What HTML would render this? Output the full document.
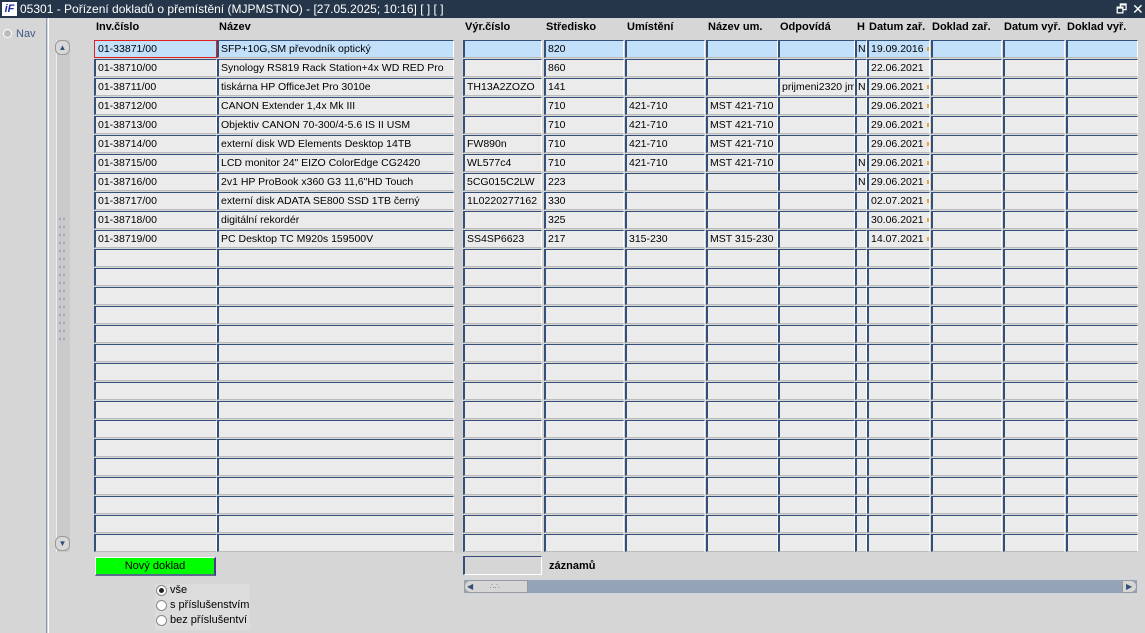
<!DOCTYPE html>
<html><head><meta charset="utf-8"><style>
*{margin:0;padding:0;box-sizing:border-box}
body{width:1145px;height:633px;overflow:hidden;background:#d6d6d6;font-family:"Liberation Sans",sans-serif;font-size:11px;position:relative;color:#000}
.a{position:absolute}
#tb{left:0;top:0;width:1145px;height:18px;background:#25364a;color:#fff;font-size:12px;line-height:18px}
#left{left:0;top:18px;width:47px;height:615px;background:#d6d6d6;border-right:1px solid #8799b3}
#left2{left:48px;top:18px;width:1px;height:615px;background:#fff}
.h{top:21px;font-weight:bold;font-size:11px}
.f{position:absolute;height:18px;background:#ebebeb;border-top:1px solid #34507a;border-left:2px solid #34507a;border-right:1px solid #fff;border-bottom:1px solid #bbb;line-height:17px;padding-left:2px;white-space:nowrap;overflow:hidden;font-size:10.5px}
.s .f{background:#c3e0fb}
.r{position:absolute;left:0;width:1145px;height:19px}
.c1{left:94px;width:123px}.c2{left:217px;width:237px}.c3{left:463px;width:79px}.c4{left:544px;width:80px}.c5{left:625px;width:80px}.c6{left:706px;width:72px}.c7{left:778px;width:77px}.c8{left:855px;width:12px;padding-left:1px}.c9{left:867px;width:63px}.c10{left:931px;width:71px}.c11{left:1003px;width:62px}.c12{left:1066px;width:72px}
.c9::after{content:"";position:absolute;right:0;top:6px;width:2px;height:4px;background:#e8a43a}
.e9 .c9::after{display:none}
</style></head><body>
<div id="tb" class="a"><span class="a" style="left:2px;top:2px;width:15px;height:14px;background:#fff;color:#1a2aa8;font-weight:bold;font-style:italic;font-size:11px;line-height:14px;text-align:center">iF</span><span class="a" style="left:20px">05301 - Pořízení dokladů o přemístění (MJPMSTNO) - [27.05.2025; 10:16]  [ ]  [ ]</span><span class="a" style="left:1116px;font-size:12px">🗗</span><span class="a" style="left:1132px;font-size:14px">✕</span></div>
<div id="left" class="a"></div><div id="left2" class="a"></div>
<div class="a" style="left:3px;top:29px;width:9px;height:9px;border-radius:50%;background:#bbb;border:1px solid #fff"></div>
<div class="a" style="left:16px;top:28px;color:#3d5a8a;font-size:11px">Nav</div>
<div class="a" style="left:56px;top:40px;width:14px;height:512px;background:#cacaca;border-left:1px solid #eee"></div>
<div class="a" style="left:55px;top:40px;width:15px;height:15px;background:#d8d8d8;border:1px solid #999;border-radius:6px;text-align:center;font-size:8px;line-height:13px;color:#34507a">▲</div>
<div class="a" style="left:55px;top:536px;width:15px;height:15px;background:#d8d8d8;border:1px solid #999;border-radius:6px;text-align:center;font-size:8px;line-height:13px;color:#34507a">▼</div>
<div class="a" style="left:58px;top:215px;width:8px;height:130px;background-image:radial-gradient(#8a9ab5 0.6px,transparent 0.9px);background-size:4px 8px"></div>
<div class="a" style="left:454px;top:40px;width:8px;height:513px;background:#cfcfcf"></div>
<div class="a h" style="left:96px">Inv.číslo</div><div class="a h" style="left:219px">Název</div><div class="a h" style="left:465px">Výr.číslo</div><div class="a h" style="left:546px">Středisko</div><div class="a h" style="left:627px">Umístění</div><div class="a h" style="left:708px">Název um.</div><div class="a h" style="left:780px">Odpovídá</div><div class="a h" style="left:857px">H</div><div class="a h" style="left:869px">Datum zař.</div><div class="a h" style="left:932px">Doklad zař.</div><div class="a h" style="left:1004px">Datum vyř.</div><div class="a h" style="left:1067px">Doklad vyř.</div>
<div class="r s" style="top:40px"><div class="f c1" style="border:1px solid #e02020;background:#c3e0fb;padding-left:3px">01-33871/00</div><div class="f c2">SFP+10G,SM převodník optický</div><div class="f c3"></div><div class="f c4">820</div><div class="f c5"></div><div class="f c6"></div><div class="f c7"></div><div class="f c8">N</div><div class="f c9">19.09.2016</div><div class="f c10"></div><div class="f c11"></div><div class="f c12"></div></div>
<div class="r e9" style="top:59px"><div class="f c1">01-38710/00</div><div class="f c2">Synology RS819 Rack Station+4x WD RED Pro</div><div class="f c3"></div><div class="f c4">860</div><div class="f c5"></div><div class="f c6"></div><div class="f c7"></div><div class="f c8"></div><div class="f c9">22.06.2021</div><div class="f c10"></div><div class="f c11"></div><div class="f c12"></div></div>
<div class="r" style="top:78px"><div class="f c1">01-38711/00</div><div class="f c2">tiskárna HP OfficeJet Pro 3010e</div><div class="f c3">TH13A2ZOZO</div><div class="f c4">141</div><div class="f c5"></div><div class="f c6"></div><div class="f c7">prijmeni2320 jmeno</div><div class="f c8">N</div><div class="f c9">29.06.2021</div><div class="f c10"></div><div class="f c11"></div><div class="f c12"></div></div>
<div class="r" style="top:97px"><div class="f c1">01-38712/00</div><div class="f c2">CANON Extender 1,4x Mk III</div><div class="f c3"></div><div class="f c4">710</div><div class="f c5">421-710</div><div class="f c6">MST 421-710</div><div class="f c7"></div><div class="f c8"></div><div class="f c9">29.06.2021</div><div class="f c10"></div><div class="f c11"></div><div class="f c12"></div></div>
<div class="r" style="top:116px"><div class="f c1">01-38713/00</div><div class="f c2">Objektiv CANON 70-300/4-5.6 IS II USM</div><div class="f c3"></div><div class="f c4">710</div><div class="f c5">421-710</div><div class="f c6">MST 421-710</div><div class="f c7"></div><div class="f c8"></div><div class="f c9">29.06.2021</div><div class="f c10"></div><div class="f c11"></div><div class="f c12"></div></div>
<div class="r" style="top:135px"><div class="f c1">01-38714/00</div><div class="f c2">externí disk WD Elements Desktop 14TB</div><div class="f c3">FW890n</div><div class="f c4">710</div><div class="f c5">421-710</div><div class="f c6">MST 421-710</div><div class="f c7"></div><div class="f c8"></div><div class="f c9">29.06.2021</div><div class="f c10"></div><div class="f c11"></div><div class="f c12"></div></div>
<div class="r" style="top:154px"><div class="f c1">01-38715/00</div><div class="f c2">LCD monitor 24" EIZO ColorEdge CG2420</div><div class="f c3">WL577c4</div><div class="f c4">710</div><div class="f c5">421-710</div><div class="f c6">MST 421-710</div><div class="f c7"></div><div class="f c8">N</div><div class="f c9">29.06.2021</div><div class="f c10"></div><div class="f c11"></div><div class="f c12"></div></div>
<div class="r" style="top:173px"><div class="f c1">01-38716/00</div><div class="f c2">2v1 HP ProBook x360 G3 11,6"HD Touch</div><div class="f c3">5CG015C2LW</div><div class="f c4">223</div><div class="f c5"></div><div class="f c6"></div><div class="f c7"></div><div class="f c8">N</div><div class="f c9">29.06.2021</div><div class="f c10"></div><div class="f c11"></div><div class="f c12"></div></div>
<div class="r" style="top:192px"><div class="f c1">01-38717/00</div><div class="f c2">externí disk ADATA SE800 SSD 1TB černý</div><div class="f c3">1L0220277162</div><div class="f c4">330</div><div class="f c5"></div><div class="f c6"></div><div class="f c7"></div><div class="f c8"></div><div class="f c9">02.07.2021</div><div class="f c10"></div><div class="f c11"></div><div class="f c12"></div></div>
<div class="r" style="top:211px"><div class="f c1">01-38718/00</div><div class="f c2">digitální rekordér</div><div class="f c3"></div><div class="f c4">325</div><div class="f c5"></div><div class="f c6"></div><div class="f c7"></div><div class="f c8"></div><div class="f c9">30.06.2021</div><div class="f c10"></div><div class="f c11"></div><div class="f c12"></div></div>
<div class="r" style="top:230px"><div class="f c1">01-38719/00</div><div class="f c2">PC Desktop TC M920s 159500V</div><div class="f c3">SS4SP6623</div><div class="f c4">217</div><div class="f c5">315-230</div><div class="f c6">MST 315-230</div><div class="f c7"></div><div class="f c8"></div><div class="f c9">14.07.2021</div><div class="f c10"></div><div class="f c11"></div><div class="f c12"></div></div>
<div id="empty"></div>
<script>
var h='';for(var i=0;i<16;i++){h+='<div class="r e9" style="top:'+(249+i*19)+'px">';for(var c=1;c<=12;c++)h+='<div class="f c'+c+'"></div>';h+='</div>';}
document.getElementById('empty').innerHTML=h;
</script>
<div class="a" style="left:95px;top:557px;width:121px;height:19px;background:#00ff00;border:1px solid #fff;border-right:2px solid #4a3a8a;border-bottom:2px solid #5a6a8a;text-align:center;line-height:16px;font-size:11px">Nový doklad</div>
<div class="a" style="left:463px;top:556px;width:79px;height:19px;background:#d6d6d6;border-top:1px solid #34507a;border-left:2px solid #34507a;border-right:1px solid #fff;border-bottom:1px solid #fff"></div>
<div class="a" style="left:549px;top:560px;font-weight:bold">záznamů</div>
<div class="a" style="left:463px;top:579px;width:675px;height:15px;background:#94a3b6;border:1px solid #d0d6e0"></div>
<div class="a" style="left:464px;top:580px;width:64px;height:13px;background:#d6d6d6;border-radius:6px 0 0 6px;border:1px solid #999;font-size:8px;line-height:11px;color:#34507a;padding-left:2px">◀ <span style="color:#888;margin-left:14px">∴∴</span></div>
<div class="a" style="left:1122px;top:580px;width:15px;height:13px;background:#d6d6d6;border-radius:0 6px 6px 0;border:1px solid #999;font-size:8px;line-height:11px;color:#34507a;padding-left:3px">▶</div>
<div class="a" style="left:155px;top:584px;width:95px;height:46px;background:#dcdcdc"></div>
<div class="a" style="left:156px;top:585px;width:11px;height:11px;border-radius:50%;background:#fff;border:1px solid #888"><div class="a" style="left:2px;top:2px;width:5px;height:5px;border-radius:50%;background:#222"></div></div>
<div class="a" style="left:156px;top:600px;width:11px;height:11px;border-radius:50%;background:#fff;border:1px solid #888"></div>
<div class="a" style="left:156px;top:615px;width:11px;height:11px;border-radius:50%;background:#fff;border:1px solid #888"></div>
<div class="a" style="left:170px;top:584px">vše</div>
<div class="a" style="left:170px;top:599px">s příslušenstvím</div>
<div class="a" style="left:170px;top:614px">bez příslušentví</div>
</body></html>
